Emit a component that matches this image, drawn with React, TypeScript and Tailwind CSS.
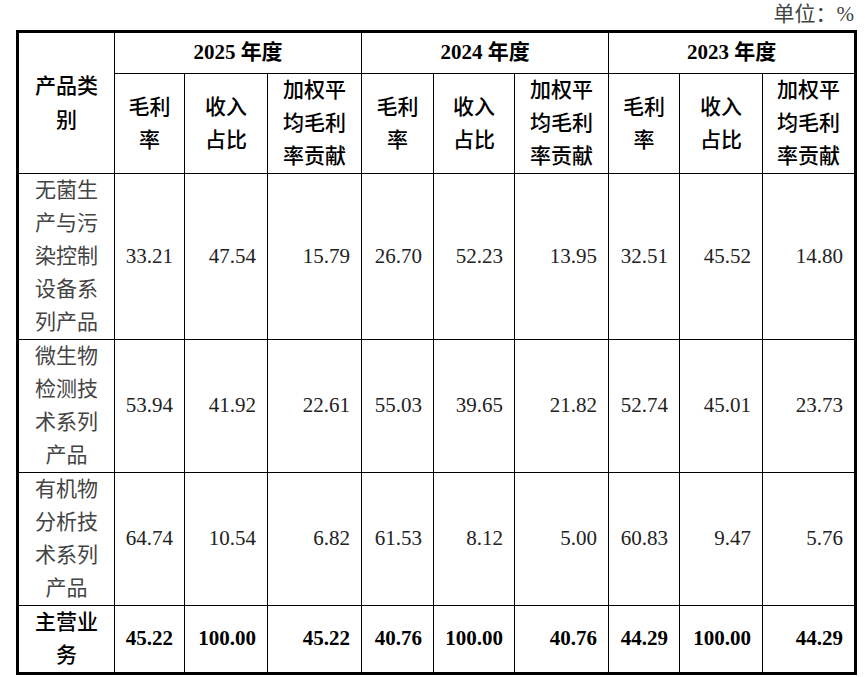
const colWidths = [
  "w-[97px]",
  "w-[70px]",
  "w-[83px]",
  "w-[94px]",
  "w-[72px]",
  "w-[81px]",
  "w-[94px]",
  "w-[71px]",
  "w-[83px]",
  "w-[93px]",
];

const years = ["2025", "2024", "2023"];

const subHeads = ["毛利率", "收入占比", "加权平均毛利率贡献"];

const rows = [
  {
    name: "无菌生产与污染控制设备系列产品",
    values: ["33.21", "47.54", "15.79", "26.70", "52.23", "13.95", "32.51", "45.52", "14.80"],
  },
  {
    name: "微生物检测技术系列产品",
    values: ["53.94", "41.92", "22.61", "55.03", "39.65", "21.82", "52.74", "45.01", "23.73"],
  },
  {
    name: "有机物分析技术系列产品",
    values: ["64.74", "10.54", "6.82", "61.53", "8.12", "5.00", "60.83", "9.47", "5.76"],
  },
];

const total = ["45.22", "100.00", "45.22", "40.76", "100.00", "40.76", "44.29", "100.00", "44.29"];

export default function App() {
  return (
    <div className="w-[865px] h-[677px] bg-white pl-[16px] pr-[11px] font-['Liberation_Serif','Noto_Sans_CJK_SC',serif] text-[21px] text-[#222]">
      {/* unit caption */}
      <div className="flex justify-end items-center h-[30px] text-[#444]">
        单位：%
      </div>

      <table className="w-[838px] table-fixed border-collapse border-[3px] border-black">
        <colgroup>
          {colWidths.map((w, i) => (
            <col key={i} className={w} />
          ))}
        </colgroup>
        <thead>
          <tr className="h-[42px]">
            <th
              rowSpan={2}
              className="border border-black px-[12px] leading-[34px] font-medium text-black text-center"
            >
              产品类别
            </th>
            {years.map((y) => (
              <th
                key={y}
                colSpan={3}
                className="border border-black font-bold text-black text-center"
              >
                {y} 年度
              </th>
            ))}
          </tr>
          <tr>
            {years.map((y) =>
              subHeads.map((s) => (
                <th
                  key={y + s}
                  className="border border-black px-[12px] py-0 leading-[33px] font-medium text-black text-center"
                >
                  {s}
                </th>
              ))
            )}
          </tr>
        </thead>
        <tbody>
          {rows.map((r) => (
            <tr key={r.name}>
              <td className="border border-black px-[12px] py-0 leading-[33px] text-center text-[#444]">
                {r.name}
              </td>
              {r.values.map((v, i) => (
                <td
                  key={i}
                  className="border border-black pr-[11px] text-right text-[#222]"
                >
                  {v}
                </td>
              ))}
            </tr>
          ))}
          <tr>
            <td className="border border-black px-[12px] py-0 leading-[33px] text-center font-medium text-black">
              主营业务
            </td>
            {total.map((v, i) => (
              <td
                key={i}
                className="border border-black pr-[11px] text-right font-bold text-black"
              >
                {v}
              </td>
            ))}
          </tr>
        </tbody>
      </table>
    </div>
  );
}
